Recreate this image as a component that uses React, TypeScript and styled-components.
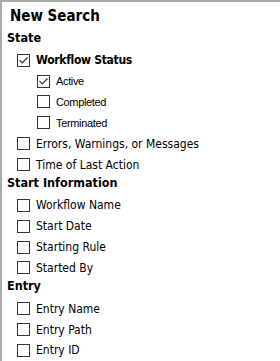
import React from "react";
import styled, { createGlobalStyle } from "styled-components";

const Global = createGlobalStyle`
  html, body { margin: 0; padding: 0; background: #fff; }
  body { font-family: Tahoma, "DejaVu Sans Condensed", "DejaVu Sans", sans-serif; color: #000; }
`;

const Panel = styled.div`
  width: 280px;
  height: 361px;
  box-sizing: border-box;
  border-top: 2px solid #a9a9a9;
  border-left: 2px solid #a9a9a9;
  background: #fff;
  overflow: hidden;
  padding: 5px 0 0 5px;
  display: flex;
  flex-direction: column;
`;

const Title = styled.div`
  font-size: 15px;
  font-weight: bold;
  height: 23px;
  line-height: 18px;
  padding-left: 3px;
`;

const Section = styled.div`
  font-size: 12.5px;
  font-weight: bold;
  height: 20px;
  line-height: 16px;
`;

const Row = styled.label<{ $indent: number; $bold?: boolean; $small?: boolean }>`
  display: flex;
  align-items: center;
  gap: 6px;
  height: 21px;
  padding-left: ${(p) => p.$indent}px;
  font-family: ${(p) =>
    p.$small ? `"Liberation Sans", Arial, sans-serif` : `"DejaVu Sans Condensed", "DejaVu Sans", sans-serif`};
  font-size: ${(p) => (p.$bold ? 12 : p.$small ? 11 : 12)}px;
  font-weight: ${(p) => (p.$bold ? "bold" : "normal")};
  letter-spacing: ${(p) => (p.$bold ? -0.3 : p.$small ? -0.35 : 0)}px;
  white-space: nowrap;
`;

const Box = styled.span`
  width: 13px;
  height: 13px;
  box-sizing: border-box;
  border: 1px solid #333;
  background: #fff;
  flex: none;
  display: flex;
`;

const Check = ({ on }: { on?: boolean }) => (
  <Box>
    {on && (
      <svg width="11" height="11" viewBox="0 0 11 11">
        <path d="M1.5 5.2 L4.3 8 L9.5 2.5" fill="none" stroke="#333" strokeWidth="1.2" />
      </svg>
    )}
  </Box>
);

type Item = { label: string; indent: number; on?: boolean; bold?: boolean; small?: boolean };

const Group = ({ title, items }: { title: string; items: Item[] }) => (
  <>
    <Section>{title}</Section>
    {items.map((it) => (
      <Row key={it.label} $indent={it.indent} $bold={it.bold} $small={it.small}>
        <Check on={it.on} />
        {it.label}
      </Row>
    ))}
  </>
);

export default function App() {
  return (
    <>
      <Global />
      <Panel>
        <Title>New Search</Title>
        <Group
          title="State"
          items={[
            { label: "Workflow Status", indent: 10, on: true, bold: true },
            { label: "Active", indent: 30, on: true, small: true },
            { label: "Completed", indent: 30, small: true },
            { label: "Terminated", indent: 30, small: true },
            { label: "Errors, Warnings, or Messages", indent: 10 },
            { label: "Time of Last Action", indent: 10 },
          ]}
        />
        <Group
          title="Start Information"
          items={[
            { label: "Workflow Name", indent: 10 },
            { label: "Start Date", indent: 10 },
            { label: "Starting Rule", indent: 10 },
            { label: "Started By", indent: 10 },
          ]}
        />
        <Group
          title="Entry"
          items={[
            { label: "Entry Name", indent: 10 },
            { label: "Entry Path", indent: 10 },
            { label: "Entry ID", indent: 10 },
          ]}
        />
      </Panel>
    </>
  );
}
